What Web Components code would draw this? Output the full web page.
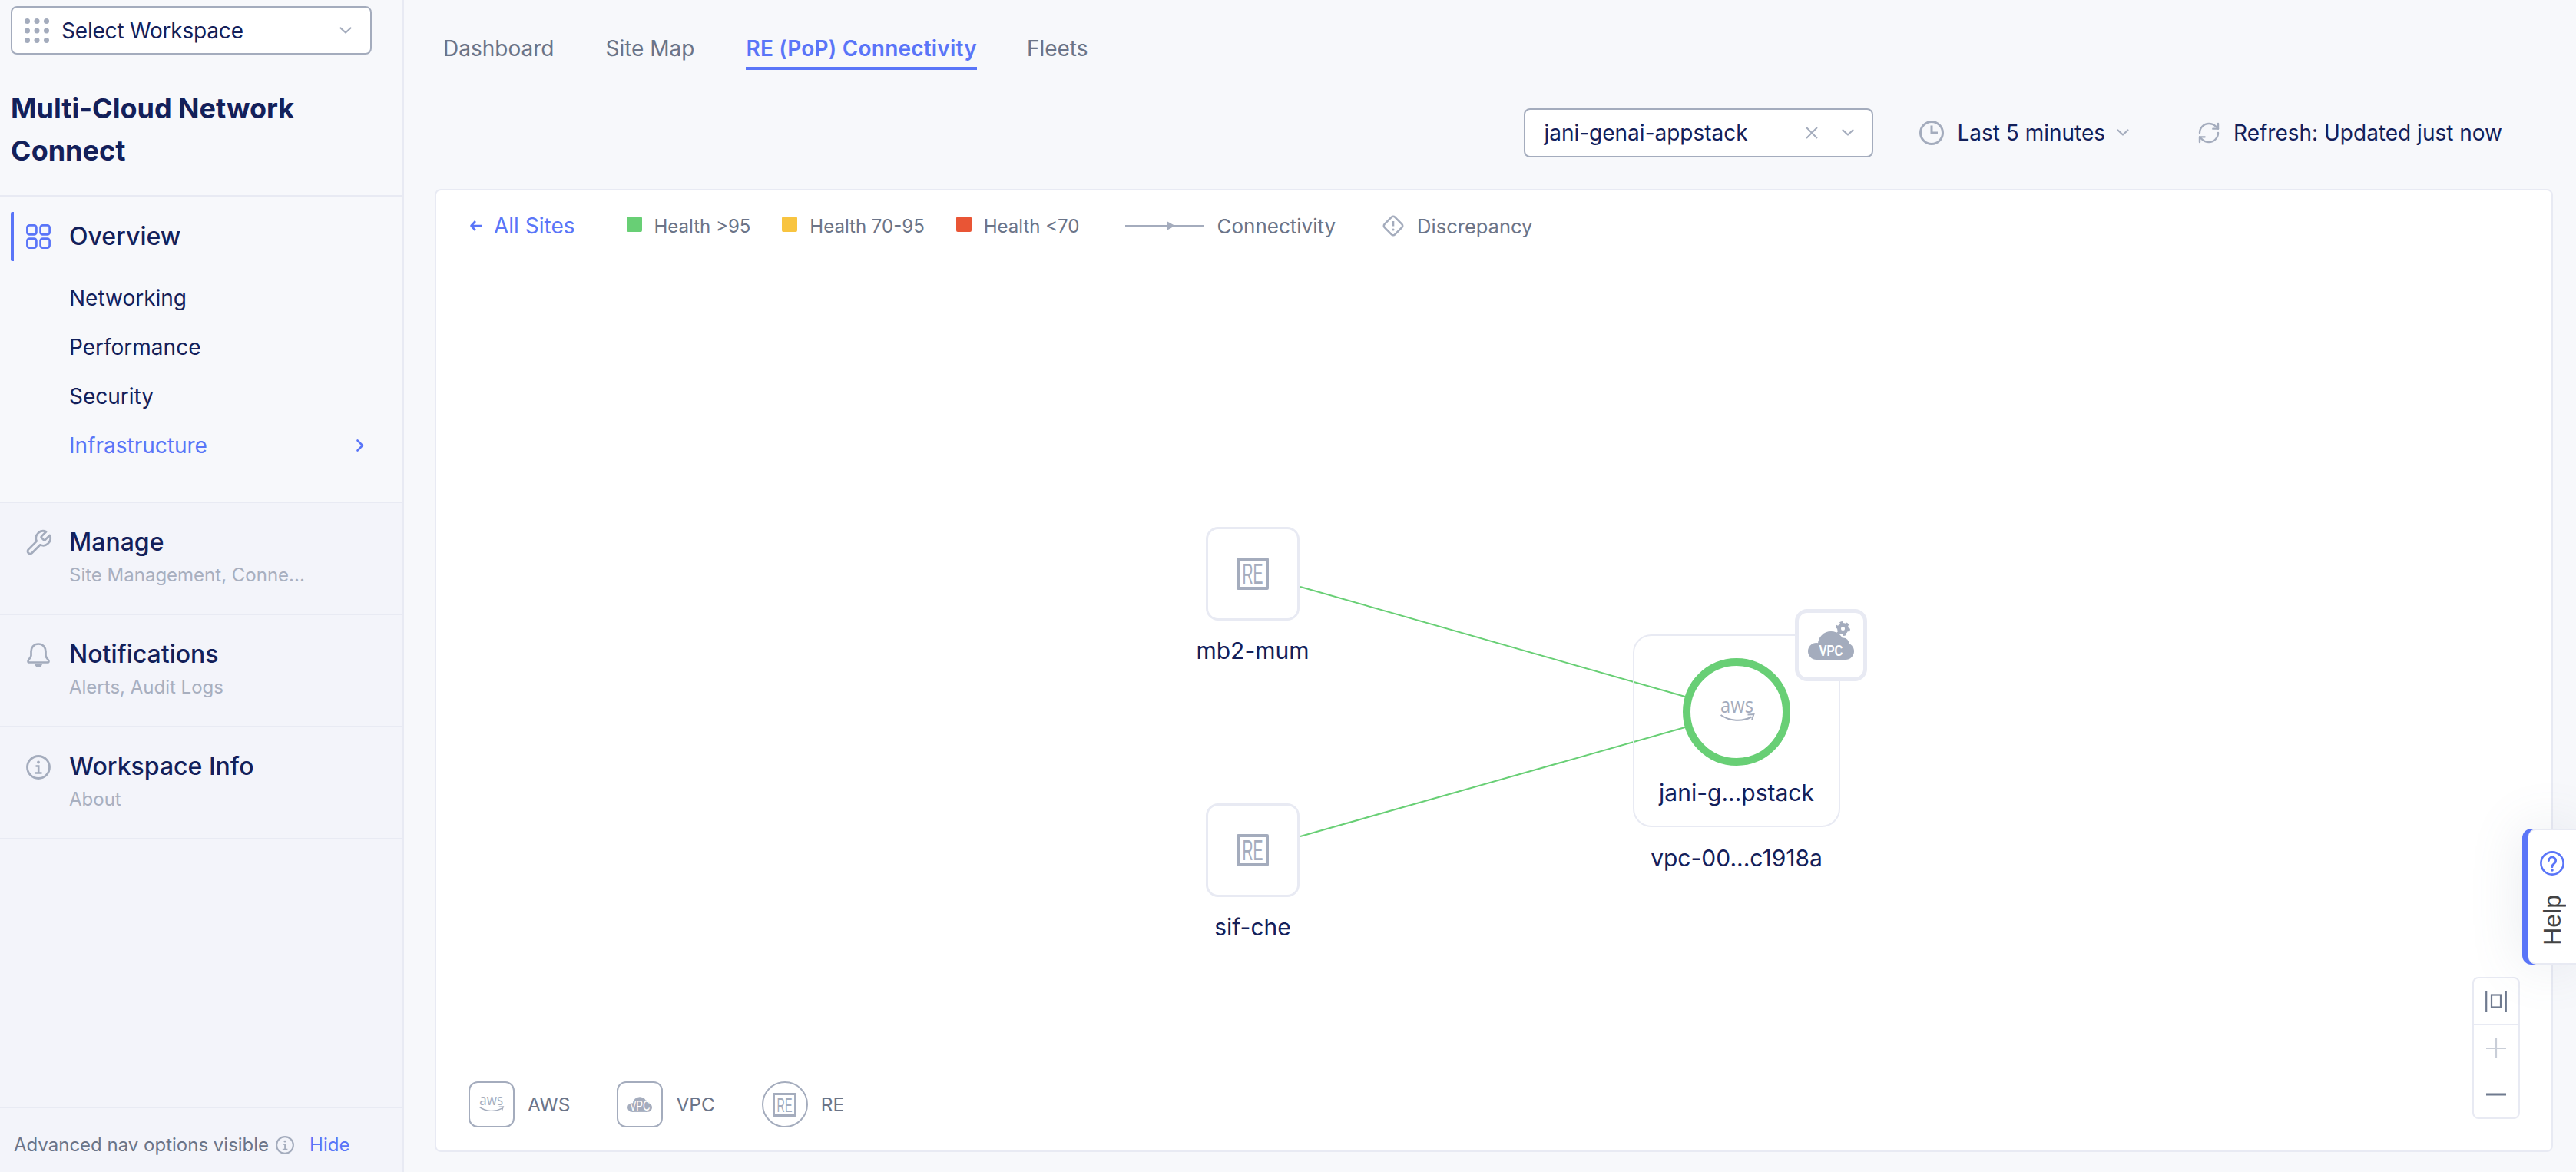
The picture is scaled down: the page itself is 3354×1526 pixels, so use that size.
<!DOCTYPE html>
<html lang="en">
<head>
<meta charset="utf-8">
<title>Multi-Cloud Network Connect</title>
<style>
  html, body { margin: 0; padding: 0; height: 100%; background: #f7f8fb; }
  body { font-family: Inter, "Liberation Sans", sans-serif; color: #13205a; overflow: hidden; }
</style>
</head>
<body>
<app-shell>
  <side-nav slot="side">
    <workspace-select>Select Workspace</workspace-select>
    <nav-title>Multi-Cloud Network Connect</nav-title>
    <nav-group>
      <nav-head>Overview</nav-head>
      <nav-link>Networking</nav-link>
      <nav-link>Performance</nav-link>
      <nav-link>Security</nav-link>
      <nav-link active>Infrastructure</nav-link>
    </nav-group>
    <nav-section icon="wrench" sub="Site Management, Conne...">Manage</nav-section>
    <nav-section icon="bell" sub="Alerts, Audit Logs">Notifications</nav-section>
    <nav-section icon="info" sub="About">Workspace Info</nav-section>
    <nav-footer slot="footer">Advanced nav options visible</nav-footer>
  </side-nav>
  <main-pane>
    <tab-bar>
      <tab-item>Dashboard</tab-item>
      <tab-item>Site Map</tab-item>
      <tab-item active>RE (PoP) Connectivity</tab-item>
      <tab-item style="margin-left:-2px">Fleets</tab-item>
    </tab-bar>
    <filter-bar>
      <site-select>jani-genai-appstack</site-select>
      <time-range>Last 5 minutes</time-range>
      <refresh-status>Refresh: Updated just now</refresh-status>
    </filter-bar>
    <topology-card>
      <legend-row slot="top">
        <back-link>All Sites</back-link>
        <legend-item swatch="#68cf75" style="margin-left:67px">Health &gt;95</legend-item>
        <legend-item swatch="#f8c440" style="margin-left:41px">Health 70-95</legend-item>
        <legend-item swatch="#e95535" style="margin-left:41px">Health &lt;70</legend-item>
        <legend-item icon="conn" style="margin-left:60px">Connectivity</legend-item>
        <legend-item icon="diamond" style="margin-left:61px;font-size:25.5px">Discrepancy</legend-item>
      </legend-row>
      <topo-canvas>
        <re-node style="left:913px;top:346px">mb2-mum</re-node>
        <re-node style="left:913px;top:706px">sif-che</re-node>
        <vpc-site style="left:1558px;top:486px" site="jani-g...pstack">vpc-00...c1918a</vpc-site>
      </topo-canvas>
      <type-legend slot="bottom">
        <type-item kind="aws">AWS</type-item>
        <type-item kind="vpc">VPC</type-item>
        <type-item kind="re">RE</type-item>
      </type-legend>
      <zoom-controls slot="overlay"></zoom-controls>
    </topology-card>
  </main-pane>
  <help-tab slot="over">Help</help-tab>
</app-shell>

<script>
const CLOUD = (dy) => `<g fill="currentColor"><circle cx="11" cy="${26+dy}" r="11"/><circle cx="30" cy="${17+dy}" r="17"/><circle cx="46" cy="${16+dy}" r="7.5"/><circle cx="49" cy="${26+dy}" r="11"/><rect x="11" y="${18+dy}" width="38" height="19"/></g>`;
const ICONS = {
  dots: [32, 32, [[3.5,3.5],[16,3.5],[28.5,3.5],[3.5,16],[16,16],[28.5,16],[3.5,28.5],[16,28.5],[28.5,28.5]].map(p=>`<circle cx="${p[0]}" cy="${p[1]}" r="3.5" fill="currentColor"/>`).join('')],
  chevdown: [16, 16, `<path d="M1.5 4.5 8 10.5l6.5-6" fill="none" stroke="currentColor" stroke-width="2.2" stroke-linecap="round" stroke-linejoin="round"/>`],
  chevright: [10, 16, `<path d="M1.5 1.5 8 8l-6.5 6.5" fill="none" stroke="currentColor" stroke-width="2.6" stroke-linecap="round" stroke-linejoin="round"/>`],
  grid: [32, 32, `<g fill="none" stroke="currentColor" stroke-width="2.7"><rect x="1.4" y="1.4" width="12" height="12" rx="3"/><rect x="18.6" y="1.4" width="12" height="12" rx="3"/><rect x="1.4" y="18.6" width="12" height="12" rx="3"/><rect x="18.6" y="18.6" width="12" height="12" rx="3"/></g>`],
  wrench: [24, 24, `<g transform="translate(12 12) scale(1.17) translate(-12 -12)"><path d="M14.7 6.3a1 1 0 0 0 0 1.4l1.6 1.6a1 1 0 0 0 1.4 0l3.77-3.77a6 6 0 0 1-7.94 7.94l-6.91 6.91a2.12 2.12 0 0 1-3-3l6.91-6.91a6 6 0 0 1 7.94-7.94l-3.76 3.76z" fill="none" stroke="currentColor" stroke-width="1.75" stroke-linecap="round" stroke-linejoin="round"/></g>`],
  bell: [32, 32, `<path d="M16 1.5c-6 0-9.5 4.5-9.5 10v5c0 3-4 5-4 7.5 0 1.2 1 1.5 2 1.5h23c1 0 2-.3 2-1.5 0-2.5-4-4.5-4-7.5v-5c0-5.5-3.5-10-9.5-10z" fill="none" stroke="currentColor" stroke-width="2.7" stroke-linejoin="round"/><path d="M11 27.5h10a5 4 0 0 1-10 0z" fill="currentColor"/>`],
  info: [32, 32, `<circle cx="16" cy="16" r="14.5" fill="none" stroke="currentColor" stroke-width="2.8"/><circle cx="16" cy="9.5" r="1.9" fill="currentColor"/><path d="M12.5 14.5H16.2V23M11.8 23.5h8.7" fill="none" stroke="currentColor" stroke-width="2.6"/>`],
  clock: [32, 32, `<circle cx="16" cy="16" r="14.5" fill="none" stroke="currentColor" stroke-width="3"/><path d="M16 6.5V16h8" fill="none" stroke="currentColor" stroke-width="3"/>`],
  refresh: [24, 24, `<g fill="none" stroke="currentColor" stroke-width="1.8" stroke-linecap="round" stroke-linejoin="round"><path d="M3 12a9 9 0 0 1 9-9 9.75 9.75 0 0 1 6.74 2.74L21 8"/><path d="M21 3v5h-5"/><path d="M21 12a9 9 0 0 1-9 9 9.75 9.75 0 0 1-6.74-2.74L3 16"/><path d="M8 16H3v5"/></g>`],
  close: [16, 16, `<path d="M1 1l14 14M15 1 1 15" fill="none" stroke="currentColor" stroke-width="2"/>`],
  back: [16, 14, `<path d="M7 1 1.5 7 7 13M2 7h14" fill="none" stroke="currentColor" stroke-width="2.6" stroke-linejoin="round"/>`],
  conn: [102, 14, `<path d="M0 7h102" stroke="currentColor" stroke-width="2.2"/><path d="M54 1l11 6-11 6z" fill="currentColor"/>`],
  diamond: [28, 28, `<rect x="4.5" y="4.5" width="19" height="19" rx="3" transform="rotate(45 14 14)" fill="none" stroke="currentColor" stroke-width="2.6"/><path d="M14 8v6.5" stroke="currentColor" stroke-width="2.6"/><circle cx="14" cy="19" r="1.6" fill="currentColor"/>`],
  help: [32, 32, `<circle cx="16" cy="16" r="14.6" fill="none" stroke="currentColor" stroke-width="2.6"/><path d="M11.5 12.5a4.6 4.6 0 1 1 7.4 3.7c-1.6 1.2-2.9 2-2.9 4v.6" fill="none" stroke="currentColor" stroke-width="2.8" stroke-linecap="round"/><circle cx="16" cy="25" r="1.8" fill="currentColor"/>`],
  fit: [28, 28, `<g fill="none" stroke="currentColor" stroke-width="2.2"><path d="M1.2 0v28M26.8 0v28"/><rect x="8" y="5.5" width="12" height="16"/></g>`],
  plus: [26, 26, `<path d="M0 13h26M13 0v26" stroke="currentColor" stroke-width="2.2"/>`],
  minus: [26, 26, `<path d="M0 13h26" stroke="currentColor" stroke-width="3"/>`],
  re: [42, 42, `<rect x="2" y="2" width="38" height="38" fill="none" stroke="currentColor" stroke-width="4" stroke-linejoin="round"/><text x="21" y="34" text-anchor="middle" font-family="'Liberation Sans',sans-serif" font-size="36" textLength="27" lengthAdjust="spacingAndGlyphs" fill="currentColor">RE</text>`],
  aws: [44, 28, `<text x="21.5" y="15.5" text-anchor="middle" font-family="'Open Sans',sans-serif" font-size="28" textLength="43" lengthAdjust="spacingAndGlyphs" fill="currentColor">aws</text><path d="M0.5 19c11 8 28 9 40 2.5" fill="none" stroke="currentColor" stroke-width="2"/><path d="M35.5 18.5 43.5 18l-2.5 7" fill="none" stroke="currentColor" stroke-width="1.8"/>`],
  cloud: [60, 37, CLOUD(0) + `<text x="30" y="34" text-anchor="middle" font-family="'Liberation Sans',sans-serif" font-size="33" textLength="50" lengthAdjust="spacingAndGlyphs" fill="#fff">VPC</text>`],
  vpcgear: [64, 52, CLOUD(12) + `<text x="30" y="43.5" text-anchor="middle" font-family="'Liberation Sans',sans-serif" font-weight="700" font-size="19.5" textLength="31" lengthAdjust="spacingAndGlyphs" fill="#fff">VPC</text><circle cx="45.5" cy="8.5" r="5" fill="none" stroke="currentColor" stroke-width="5"/><circle cx="45.5" cy="8.5" r="8" fill="none" stroke="currentColor" stroke-width="3" stroke-dasharray="4 4.38"/>`]
};

function iconSvg(name, w, h) {
  const d = ICONS[name];
  return `<svg xmlns="http://www.w3.org/2000/svg" width="${w || d[0]}" height="${h || d[1]}" viewBox="0 0 ${d[0]} ${d[1]}" style="display:block;overflow:visible">${d[2]}</svg>`;
}

class Comp extends HTMLElement {
  connectedCallback() {
    if (this.shadowRoot) return;
    this.attachShadow({ mode: 'open' }).innerHTML = `<style>${this.css()}</style>${this.html()}`;
  }
  css() { return ':host{display:block}'; }
  html() { return '<slot></slot>'; }
}

class AppShell extends Comp {
  css() { return `:host{display:flex;width:100%;height:100vh;position:relative;overflow:hidden}
    .main{flex:1;min-width:0;display:flex}`; }
  html() { return `<slot name="side"></slot><div class="main"><slot></slot></div><slot name="over"></slot>`; }
}
class SideNav extends Comp {
  css() { return `:host{display:flex;flex-direction:column;width:526px;flex:none;height:100%;box-sizing:border-box;
      border-right:2px solid #e8eaf3;background:linear-gradient(#f7f8fb 654px,#f3f4fa 654px)}
    .fill{flex:1}`; }
  html() { return `<slot></slot><div class="fill"></div><slot name="footer"></slot>`; }
}
class WorkspaceSelect extends Comp {
  css() { return `:host{display:flex;align-items:center;height:63px;width:470px;box-sizing:border-box;margin:8px 0 0 14px;
      background:#fff;border:2px solid #a4acbd;border-radius:8px;padding:0 24px 0 16px;
      font-size:28px;letter-spacing:-.2px;color:#13205a}
    .d{color:#a4acbd;margin-right:16px}.t{flex:1}.c{color:#a4acbd}`; }
  html() { return `<span class="d">${iconSvg('dots')}</span><span class="t"><slot></slot></span><span class="c">${iconSvg('chevdown')}</span>`; }
}
class NavTitle extends Comp {
  css() { return `:host{display:block;box-sizing:border-box;padding:43px 60px 30px 14px;
      font-size:36px;line-height:55px;font-weight:700;color:#13205a;border-bottom:2px solid #e8eaf3}`; }
}
class NavGroup extends Comp {
  css() { return `:host{display:block;padding:20px 0 41px;border-bottom:2px solid #e8eaf3;box-sizing:border-box;height:399px}`; }
}
class NavHead extends Comp {
  css() { return `:host{display:flex;align-items:center;height:64px;box-sizing:border-box;margin-left:14px;border-left:4px solid #5a75f8;border-radius:2px;
      padding:0 0 1px 16px;font-size:32px;font-weight:500;color:#13205a;margin-bottom:16px}
    .i{color:#5a75f8;margin-right:24px;display:flex}`; }
  html() { return `<span class="i">${iconSvg('grid')}</span><slot></slot>`; }
}
class NavLink extends Comp {
  css() { return `:host{display:flex;align-items:center;height:64px;padding:0 50px 0 90px;font-size:28px;color:#13205a}
    :host([active]){color:#5a75f8}
    .t{flex:1}.c{display:none}:host([active]) .c{display:block}`; }
  html() { return `<span class="t"><slot></slot></span><span class="c">${iconSvg('chevright')}</span>`; }
}
class NavSection extends Comp {
  css() { return `:host{display:grid;grid-template-columns:56px 1fr;padding:31px 0 35px 34px;border-bottom:2px solid #e8eaf3;box-sizing:border-box;height:146px;align-content:start}
    .i{color:#a4acbd;grid-row:1/3;padding-top:5px}
    .t{font-size:32px;line-height:40px;font-weight:500;color:#13205a}
    .s{font-size:24px;line-height:32px;color:#a8afbf;margin-top:7px}`; }
  html() { return `<span class="i">${iconSvg(this.getAttribute('icon'), 32, 32)}</span><span class="t"><slot></slot></span><span class="s">${this.getAttribute('sub')}</span>`; }
}
class NavFooter extends Comp {
  css() { return `:host{display:flex;align-items:center;height:85px;box-sizing:border-box;border-top:2px solid #e8eaf3;padding:12px 0 0 18px;font-size:24px;color:#6b7488}
    .i{color:#a4acbd;margin:0 20px 0 9px}.h{color:#5a75f8}`; }
  html() { return `<slot></slot><span class="i">${iconSvg('info', 24, 24)}</span><span class="h">Hide</span>`; }
}
class MainPane extends Comp {
  css() { return `:host{display:flex;flex-direction:column;flex:1;min-width:0;box-sizing:border-box;padding:0 30px 26px 40px}`; }
}
class TabBar extends Comp {
  css() { return `:host{display:flex;gap:67px;padding:43px 0 0 11px}`; }
}
class TabItem extends Comp {
  css() { return `:host{display:block;font-size:28px;line-height:40px;color:#6b7488;padding-bottom:4px;border-bottom:4px solid transparent}
    :host([active]){color:#5a75f8;font-weight:600;letter-spacing:.2px;border-bottom-color:#5a75f8}`; }
}
class FilterBar extends Comp {
  css() { return `:host{display:flex;justify-content:flex-end;align-items:center;gap:60px;height:64px;margin:50px 0 41px;padding-right:66px}
    ::slotted(refresh-status){margin-left:28px}`; }
}
class SiteSelect extends Comp {
  css() { return `:host{display:flex;align-items:center;width:455px;height:64px;box-sizing:border-box;background:#fff;border:2px solid #a4acbd;border-radius:8px;padding:0 22px 0 24px;font-size:28px;color:#13205a}
    .t{flex:1}.x{color:#a4acbd;margin-right:30px}.c{color:#a4acbd}`; }
  html() { return `<span class="t"><slot></slot></span><span class="x">${iconSvg('close')}</span><span class="c">${iconSvg('chevdown',18,16)}</span>`; }
}
class TimeRange extends Comp {
  css() { return `:host{display:flex;align-items:center;font-size:28px;color:#13205a}
    .i{color:#a4acbd;margin-right:17px}.c{color:#a4acbd;margin-left:15px}`; }
  html() { return `<span class="i">${iconSvg('clock')}</span><slot></slot><span class="c">${iconSvg('chevdown')}</span>`; }
}
class RefreshStatus extends Comp {
  css() { return `:host{display:flex;align-items:center;font-size:28px;color:#13205a}.i{color:#a4acbd;margin-right:16px}`; }
  html() { return `<span class="i">${iconSvg('refresh', 32, 32)}</span><slot></slot>`; }
}
class TopologyCard extends Comp {
  css() { return `:host{display:flex;flex-direction:column;flex:1;min-height:0;position:relative;box-sizing:border-box;background:#fff;border:2px solid #e8eaf3;border-radius:8px}
    .c{flex:1;min-height:0;display:flex}`; }
  html() { return `<slot name="top"></slot><div class="c"><slot></slot></div><slot name="bottom"></slot><slot name="overlay"></slot>`; }
}
class LegendRow extends Comp {
  css() { return `:host{display:flex;align-items:center;height:92px;flex:none;padding-left:44px}`; }
}
class BackLink extends Comp {
  css() { return `:host{display:flex;align-items:center;font-size:28px;color:#5a75f8}.i{margin-right:15px}`; }
  html() { return `<span class="i">${iconSvg('back')}</span><slot></slot>`; }
}
class LegendItem extends Comp {
  css() { return `:host{display:flex;align-items:center;font-size:24px;color:#6b7488;gap:16px}
    :host([icon]){font-size:26px;gap:17px}
    .s{width:20px;height:20px;border-radius:2px;margin-top:-4px}.i{color:#a4acbd}`; }
  html() {
    const s = this.getAttribute('swatch'), i = this.getAttribute('icon');
    return (s ? `<span class="s" style="background:${s}"></span>` : `<span class="i">${iconSvg(i)}</span>`) + '<slot></slot>';
  }
}
class TopoCanvas extends Comp {
  css() { return `:host{display:block;flex:1;position:relative}svg{position:absolute;left:0;top:0}`; }
  html() { return `<svg width="2754" height="1068" viewBox="0 0 2754 1068"><path d="M1125 424 1626 567M1125 749 1626 607" stroke="#68cf75" stroke-width="2" fill="none"/></svg><slot></slot>`; }
}
class ReNode extends Comp {
  css() { return `:host{position:absolute;width:300px;display:flex;flex-direction:column;align-items:center;font-size:30px;line-height:40px;color:#13205a}
    .b{width:122px;height:122px;box-sizing:border-box;border:3px solid #e8eaf3;border-radius:16px;background:#fff;display:flex;align-items:center;justify-content:center;color:#a4acbd;margin-bottom:19px}`; }
  html() { return `<div class="b">${iconSvg('re')}</div><slot></slot>`; }
}
class VpcSite extends Comp {
  css() { return `:host{position:absolute;width:270px;display:flex;flex-direction:column;align-items:center;font-size:30px;line-height:40px;color:#13205a;white-space:nowrap}
    .box{position:relative;width:270px;height:251px;box-sizing:border-box;border:2px solid #e8eaf3;border-radius:24px;display:flex;flex-direction:column;align-items:center;padding-top:29px;margin-bottom:20px}
    .ring{width:140px;height:140px;box-sizing:border-box;border:10px solid #68cf75;border-radius:50%;background:#fff;display:flex;align-items:center;justify-content:center;color:#a4acbd;margin-bottom:15px;padding:0 0 2px 2px}
    .badge{position:absolute;right:-37px;top:-35px;width:94px;height:94px;box-sizing:border-box;border:5px solid #e8eaf3;border-radius:16px;background:#fff;color:#a4acbd;display:flex;justify-content:center;padding:12px 0 0 4px}`; }
  html() { return `<div class="box"><div class="ring">${iconSvg('aws')}</div>${this.getAttribute('site')}<div class="badge">${iconSvg('vpcgear')}</div></div><slot></slot>`; }
}
class TypeLegend extends Comp {
  css() { return `:host{display:flex;flex:none;height:90px;padding-left:42px;gap:61px}`; }
}
class TypeItem extends Comp {
  css() { return `:host{display:flex;align-items:flex-start;font-size:24.5px;line-height:60px;color:#6b7488;gap:17px}
    .b{width:60px;height:60px;box-sizing:border-box;border:2.5px solid #a4acbd;border-radius:12px;color:#a4acbd;display:flex;align-items:center;justify-content:center}
    .b.r{border-radius:50%}`; }
  html() {
    const k = this.getAttribute('kind');
    const ic = k === 'aws' ? iconSvg('aws', 32, 20) : k === 'vpc' ? iconSvg('cloud', 32, 20) : iconSvg('re', 31, 31);
    return `<span class="b ${k === 're' ? 'r' : ''}">${ic}</span><slot></slot>`;
  }
}
class ZoomControls extends Comp {
  css() { return `:host{position:absolute;right:41px;bottom:41px;width:62px;box-sizing:border-box;border:2px solid #e8eaf3;border-radius:8px;background:#fff;display:flex;flex-direction:column;align-items:center}
    .f{height:59px;width:100%;display:flex;align-items:center;justify-content:center;border-bottom:2px solid #e8eaf3;color:#6f7a8f}
    .p,.m{height:60px;display:flex;align-items:center}.p{color:#c9ced8}.m{color:#6f7a8f}`; }
  html() { return `<div class="f">${iconSvg('fit')}</div><div class="p">${iconSvg('plus')}</div><div class="m">${iconSvg('minus')}</div>`; }
}
class HelpTab extends Comp {
  css() { return `:host{position:absolute;right:0;top:1079px;width:70px;height:177px;box-sizing:border-box;background:#5a75f8;border-radius:12px 0 0 12px;box-shadow:0 0 70px rgba(100,110,140,.14);display:flex}
    .in{flex:1;margin-left:8px;background:#fff;border-radius:10px 0 0 10px;border:2px solid #e8eaf3;border-left:0;border-right:0;display:flex;flex-direction:column;align-items:center;padding:27px 0 0 0;box-sizing:border-box;color:#444;font:32px "Liberation Sans",Arial,sans-serif}
    .i{color:#5a75f8;margin-bottom:25px}
    .t{writing-mode:vertical-rl;transform:rotate(180deg);line-height:44px}`; }
  html() { return `<div class="in"><span class="i">${iconSvg('help')}</span><span class="t"><slot></slot></span></div>`; }
}

const defs = {
  'app-shell': AppShell, 'side-nav': SideNav, 'workspace-select': WorkspaceSelect, 'nav-title': NavTitle,
  'nav-group': NavGroup, 'nav-head': NavHead, 'nav-link': NavLink, 'nav-section': NavSection, 'nav-footer': NavFooter,
  'main-pane': MainPane, 'tab-bar': TabBar, 'tab-item': TabItem, 'filter-bar': FilterBar, 'site-select': SiteSelect,
  'time-range': TimeRange, 'refresh-status': RefreshStatus, 'topology-card': TopologyCard, 'legend-row': LegendRow,
  'back-link': BackLink, 'legend-item': LegendItem, 'topo-canvas': TopoCanvas, 're-node': ReNode, 'vpc-site': VpcSite,
  'type-legend': TypeLegend, 'type-item': TypeItem, 'zoom-controls': ZoomControls, 'help-tab': HelpTab
};
for (const k in defs) customElements.define(k, defs[k]);
</script>
</body>
</html>
